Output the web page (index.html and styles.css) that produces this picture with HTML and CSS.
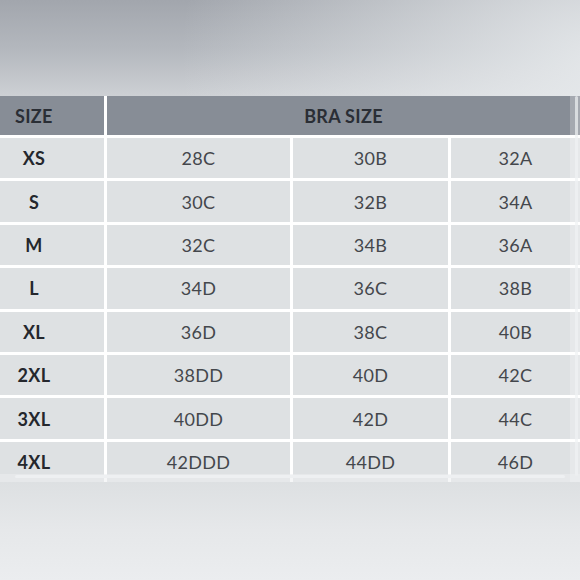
FILE: index.html
```html
<!DOCTYPE html>
<html lang="en">
<head>
<meta charset="utf-8">
<title>Size chart</title>
<link rel="stylesheet" href="styles.css">
</head>
<body>
<div class="page">
  <div class="chart-wrap">
    <div class="chart">
      <div class="head head-size">SIZE</div>
      <div class="head head-bra">BRA SIZE</div>

      <div class="label">XS</div><div class="val">28C</div><div class="val">30B</div><div class="val">32A</div>
      <div class="label">S</div><div class="val">30C</div><div class="val">32B</div><div class="val">34A</div>
      <div class="label">M</div><div class="val">32C</div><div class="val">34B</div><div class="val">36A</div>
      <div class="label">L</div><div class="val">34D</div><div class="val">36C</div><div class="val">38B</div>
      <div class="label">XL</div><div class="val">36D</div><div class="val">38C</div><div class="val">40B</div>
      <div class="label">2XL</div><div class="val">38DD</div><div class="val">40D</div><div class="val">42C</div>
      <div class="label">3XL</div><div class="val">40DD</div><div class="val">42D</div><div class="val">44C</div>
      <div class="label">4XL</div><div class="val">42DDD</div><div class="val">44DD</div><div class="val">46D</div>
    </div>
    <div class="vscroll"><div class="vthumb"></div></div>
    <div class="hscroll"><div class="hthumb"></div></div>
  </div>
</div>
</body>
</html>
```

FILE: styles.css
```css
html, body {
  margin: 0;
  padding: 0;
}

body {
  width: 580px;
  height: 580px;
  overflow: hidden;
  font-family: "Lato", "Open Sans", sans-serif;
  background:
    radial-gradient(ellipse 420px 360px at 600px 60px, rgba(235, 238, 240, 0.85), rgba(235, 238, 240, 0) 100%),
    linear-gradient(180deg, #a2a6ad 0px, #b4b8be 50px, #cdd0d4 96px, #dde0e2 482px, #e6e8ea 530px, #ebedef 580px);
}

.page {
  padding-top: 96px;
}

.chart-wrap {
  position: relative;
  width: 580px;
  overflow: hidden;
}

.chart {
  display: grid;
  grid-template-columns: 104px 183px 155px 129px;
  grid-template-rows: 39px repeat(8, 40.4px);
  gap: 3px;
  background: #ffffff;
  width: 580px;
}

.head {
  background: #878d96;
  color: #2a2e35;
  font-weight: 700;
  font-size: 18px;
  display: flex;
  align-items: center;
  letter-spacing: 0.3px;
}

.head-size {
  padding-left: 15px;
}

.head-bra {
  grid-column: 2 / 5;
  justify-content: center;
}

.label,
.val {
  background: #dee1e3;
  display: flex;
  align-items: center;
  justify-content: center;
  font-size: 18px;
}

.label {
  font-weight: 700;
  color: #24272d;
  padding-right: 36px;
  letter-spacing: 0.3px;
}

.val {
  font-weight: 400;
  color: #44474c;
  letter-spacing: 0.3px;
}

.vscroll {
  position: absolute;
  top: 0;
  right: 0;
  width: 10px;
  bottom: 0;
  background: rgba(255, 255, 255, 0.25);
}

.vthumb {
  position: absolute;
  top: 0;
  left: 5px;
  width: 3px;
  height: 380px;
  background: rgba(240, 242, 244, 0.7);
  border-radius: 2px;
}

.hscroll {
  position: absolute;
  left: 0;
  right: 0;
  bottom: 0;
  height: 8px;
  background: rgba(236, 238, 240, 0.55);
}

.hthumb {
  position: absolute;
  left: 15px;
  right: 15px;
  top: 1px;
  height: 3px;
  border-radius: 2px;
  background: #eef0f2;
}
```
